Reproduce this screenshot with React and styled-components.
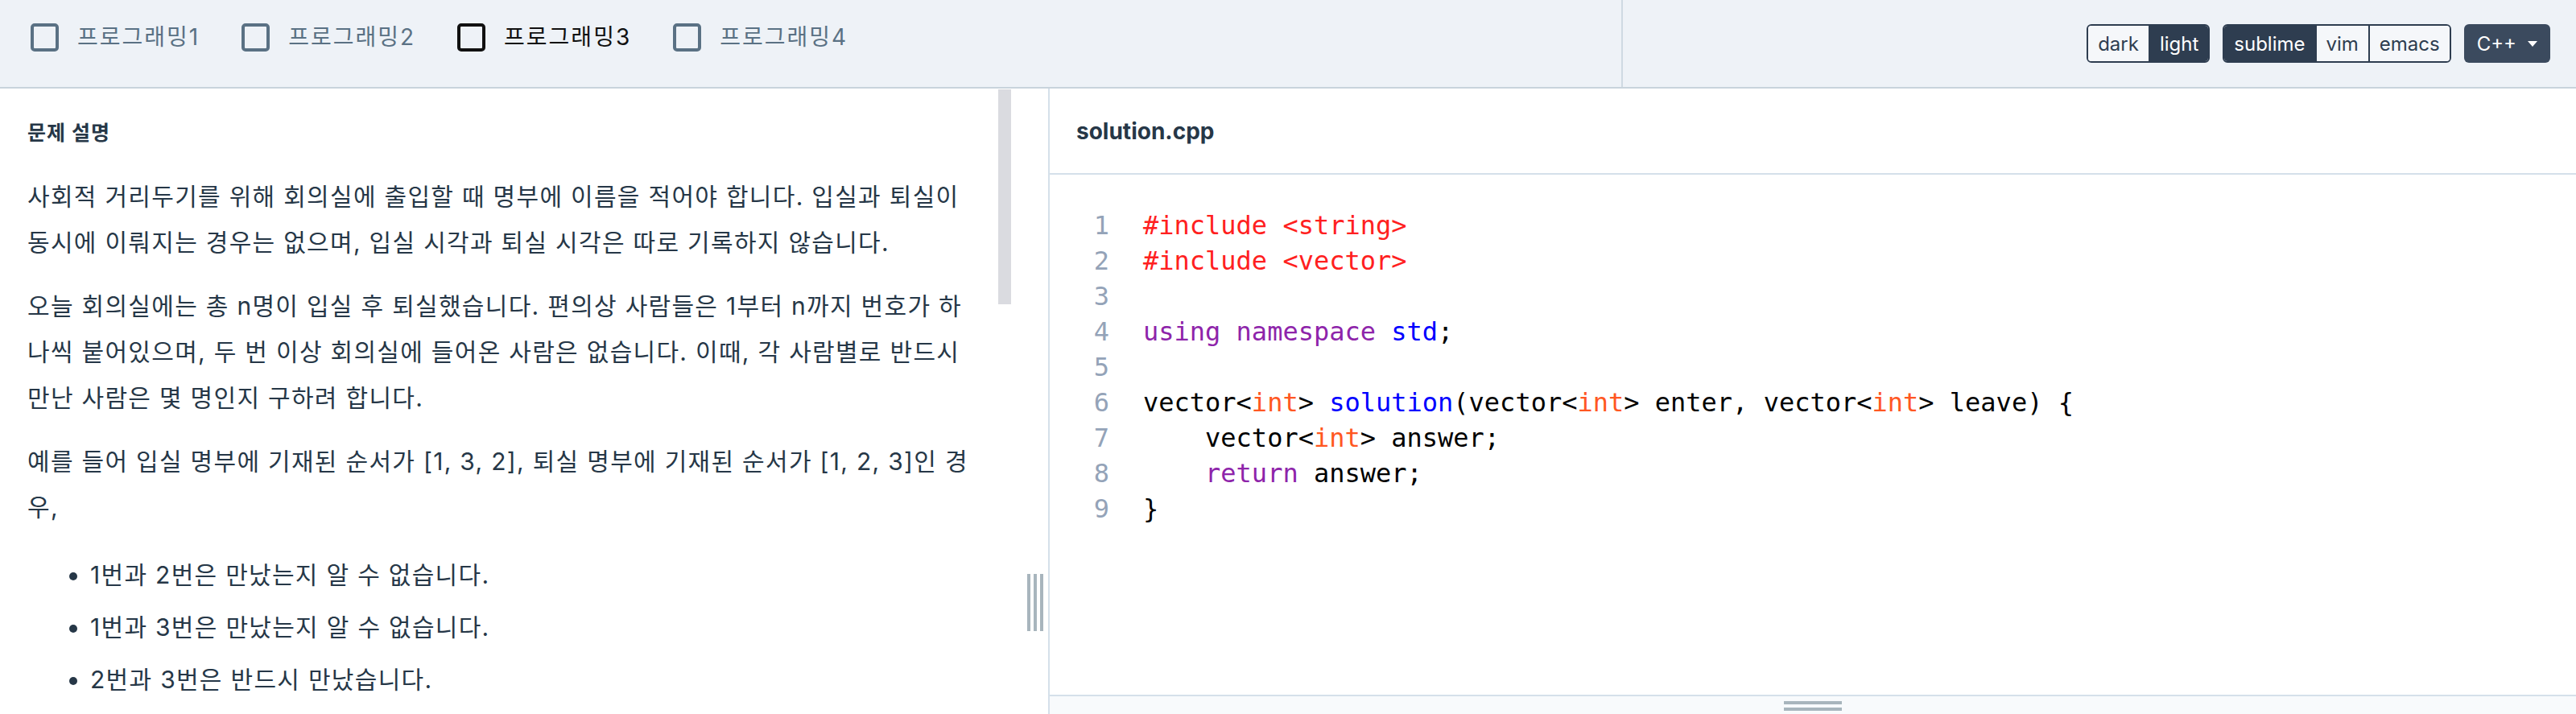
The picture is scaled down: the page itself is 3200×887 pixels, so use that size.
import React from "react";
import styled, { createGlobalStyle } from "styled-components";

const GlobalStyle = createGlobalStyle`
  html, body { margin: 0; padding: 0; background: #ffffff; }
  body {
    font-family: Inter, "Noto Sans CJK KR", "Noto Sans", sans-serif;
    color: #263747;
  }
  * { box-sizing: border-box; }
`;

const Page = styled.div`
  height: 887px;
  display: flex;
  flex-direction: column;
  overflow: hidden;
`;

const Header = styled.header`
  height: 110px;
  flex: none;
  display: flex;
  background: #eef2f7;
  border-bottom: 2px solid #c8d3dc;
`;

const TabStrip = styled.div`
  width: 2016px;
  display: flex;
  align-items: flex-start;
  gap: 52px;
  padding: 29px 0 0 38px;
  border-right: 2px solid #cfd9e2;
`;

const Tab = styled.label`
  display: flex;
  align-items: center;
  gap: 23px;
  height: 35px;
  font-size: 28px;
  letter-spacing: 2px;
  line-height: 35px;
  color: ${(p) => (p.$active ? "#111111" : "#5a7184")};
  cursor: pointer;
`;

const Box = styled.span`
  width: 35px;
  height: 35px;
  border: 4px solid currentColor;
  border-radius: 5px;
  flex: none;
`;

const Controls = styled.div`
  flex: 1;
  display: flex;
  justify-content: flex-end;
  align-items: center;
  gap: 16px;
  padding-right: 32px;
`;

const SegGroup = styled.div`
  display: flex;
  height: 48px;
  border: 2px solid #2e3d50;
  border-radius: 6px;
  overflow: hidden;
`;

const SegButton = styled.button`
  border: none;
  border-left: ${(p) => (p.$first ? "none" : "2px solid #2e3d50")};
  margin: 0;
  padding: 0 12px;
  font-family: Inter, sans-serif;
  font-size: 24px;
  background: ${(p) => (p.$active ? "#2e3d50" : "#f5f7fa")};
  color: ${(p) => (p.$active ? "#ffffff" : "#2e3d50")};
  cursor: pointer;
`;

const Dropdown = styled.button`
  display: flex;
  align-items: center;
  gap: 14px;
  height: 48px;
  padding: 0 16px;
  border: none;
  border-radius: 6px;
  background: #3b4a5e;
  color: #ffffff;
  font-family: Inter, sans-serif;
  font-size: 24px;
`;

const Caret = styled.span`
  width: 0;
  height: 0;
  border-left: 6px solid transparent;
  border-right: 6px solid transparent;
  border-top: 7px solid #ffffff;
`;

const Main = styled.div`
  flex: 1;
  display: flex;
  min-height: 0;
`;

const LeftPanel = styled.section`
  width: 1304px;
  flex: none;
  display: flex;
  border-right: 2px solid #d5e0ea;
  overflow: hidden;
  background: #ffffff;
`;

const Description = styled.article`
  width: 1240px;
  flex: none;
  padding: 37px 28px 0 34px;
  font-size: 30px;
  letter-spacing: 1.3px;
  line-height: 57px;
  color: #263747;
`;

const Heading = styled.h5`
  margin: 0 0 32px;
  font-size: 25px;
  letter-spacing: 1px;
  line-height: 37px;
  font-weight: 700;
`;

const Para = styled.p`
  margin: 0 0 22px;
`;

const List = styled.ul`
  margin: 27px 0 0;
  padding-left: 78px;
`;

const Item = styled.li`
  margin-bottom: 8px;
`;

const ScrollTrack = styled.div`
  width: 16px;
  flex: none;
  padding-top: 1px;
`;

const Thumb = styled.div`
  height: 267px;
  background: #dadbe0;
`;

const ResizeGutter = styled.div`
  flex: 1;
  padding: 603px 0 0 20px;
`;

const VGrip = styled.div`
  display: flex;
  gap: 4px;
  height: 71px;
`;

const VBar = styled.span`
  width: 4px;
  height: 100%;
  background: #a8b5bd;
`;

const RightPanel = styled.section`
  flex: 1;
  display: flex;
  flex-direction: column;
  min-width: 0;
  background: #ffffff;
`;

const FileBar = styled.div`
  height: 107px;
  flex: none;
  display: flex;
  align-items: center;
  padding-left: 33px;
  border-bottom: 2px solid #d5e0ea;
  font-size: 28px;
  font-weight: 700;
  color: #263747;
`;

const CodeArea = styled.div`
  flex: 1;
  display: flex;
  padding: 41px 0 0 40px;
  font-family: "DejaVu Sans Mono", monospace;
  font-size: 32px;
  line-height: 44px;
`;

const Gutter = styled.div`
  width: 34px;
  text-align: right;
  color: #94a3b8;
  margin-right: 42px;
`;

const CodeLines = styled.pre`
  margin: 0;
  font: inherit;
  color: #000000;
`;

const Tok = styled.span`
  color: ${(p) =>
    ({
      meta: "#ff2020",
      kw: "#8e24aa",
      def: "#0000ff",
      type: "#ff5722",
    }[p.$k] || "inherit")};
`;

const HSplitter = styled.div`
  height: 24px;
  flex: none;
  border-top: 2px solid #d5e0ea;
  background: #f8fafc;
  display: flex;
  flex-direction: column;
  align-items: center;
  gap: 4px;
  padding-top: 6px;
`;

const HBar = styled.span`
  width: 72px;
  height: 4px;
  background: #a8b5bd;
`;

const tabs = ["프로그래밍1", "프로그래밍2", "프로그래밍3", "프로그래밍4"];

function Code() {
  return (
    <CodeLines>
      <Tok $k="meta">#include &lt;string&gt;</Tok>
      {"\n"}
      <Tok $k="meta">#include &lt;vector&gt;</Tok>
      {"\n\n"}
      <Tok $k="kw">using</Tok> <Tok $k="kw">namespace</Tok> <Tok $k="def">std</Tok>;
      {"\n\n"}
      vector&lt;<Tok $k="type">int</Tok>&gt; <Tok $k="def">solution</Tok>(vector&lt;
      <Tok $k="type">int</Tok>&gt; enter, vector&lt;<Tok $k="type">int</Tok>&gt; leave) {"{"}
      {"\n"}
      {"    "}vector&lt;<Tok $k="type">int</Tok>&gt; answer;
      {"\n"}
      {"    "}<Tok $k="kw">return</Tok> answer;
      {"\n"}
      {"}"}
    </CodeLines>
  );
}

export default function App() {
  return (
    <Page>
      <GlobalStyle />
      <Header>
        <TabStrip>
          {tabs.map((t, i) => (
            <Tab key={t} $active={i === 2}>
              <Box />
              {t}
            </Tab>
          ))}
        </TabStrip>
        <Controls>
          <SegGroup>
            <SegButton $first>dark</SegButton>
            <SegButton $active>light</SegButton>
          </SegGroup>
          <SegGroup>
            <SegButton $first $active>
              sublime
            </SegButton>
            <SegButton>vim</SegButton>
            <SegButton>emacs</SegButton>
          </SegGroup>
          <Dropdown>
            C++
            <Caret />
          </Dropdown>
        </Controls>
      </Header>
      <Main>
        <LeftPanel>
          <Description>
            <Heading>문제 설명</Heading>
            <Para>
              사회적 거리두기를 위해 회의실에 출입할 때 명부에 이름을 적어야 합니다. 입실과 퇴실이
              동시에 이뤄지는 경우는 없으며, 입실 시각과 퇴실 시각은 따로 기록하지 않습니다.
            </Para>
            <Para>
              오늘 회의실에는 총 n명이 입실 후 퇴실했습니다. 편의상 사람들은 1부터 n까지 번호가
              하나씩 붙어있으며, 두 번 이상 회의실에 들어온 사람은 없습니다. 이때, 각 사람별로
              반드시 만난 사람은 몇 명인지 구하려 합니다.
            </Para>
            <Para>
              예를 들어 입실 명부에 기재된 순서가 [1, 3, 2], 퇴실 명부에 기재된 순서가 [1, 2, 3]인
              경우,
            </Para>
            <List>
              <Item>1번과 2번은 만났는지 알 수 없습니다.</Item>
              <Item>1번과 3번은 만났는지 알 수 없습니다.</Item>
              <Item>2번과 3번은 반드시 만났습니다.</Item>
            </List>
          </Description>
          <ScrollTrack>
            <Thumb />
          </ScrollTrack>
          <ResizeGutter>
            <VGrip>
              <VBar />
              <VBar />
              <VBar />
            </VGrip>
          </ResizeGutter>
        </LeftPanel>
        <RightPanel>
          <FileBar>solution.cpp</FileBar>
          <CodeArea>
            <Gutter>
              {[1, 2, 3, 4, 5, 6, 7, 8, 9].map((n) => (
                <div key={n}>{n}</div>
              ))}
            </Gutter>
            <Code />
          </CodeArea>
          <HSplitter>
            <HBar />
            <HBar />
          </HSplitter>
        </RightPanel>
      </Main>
    </Page>
  );
}
